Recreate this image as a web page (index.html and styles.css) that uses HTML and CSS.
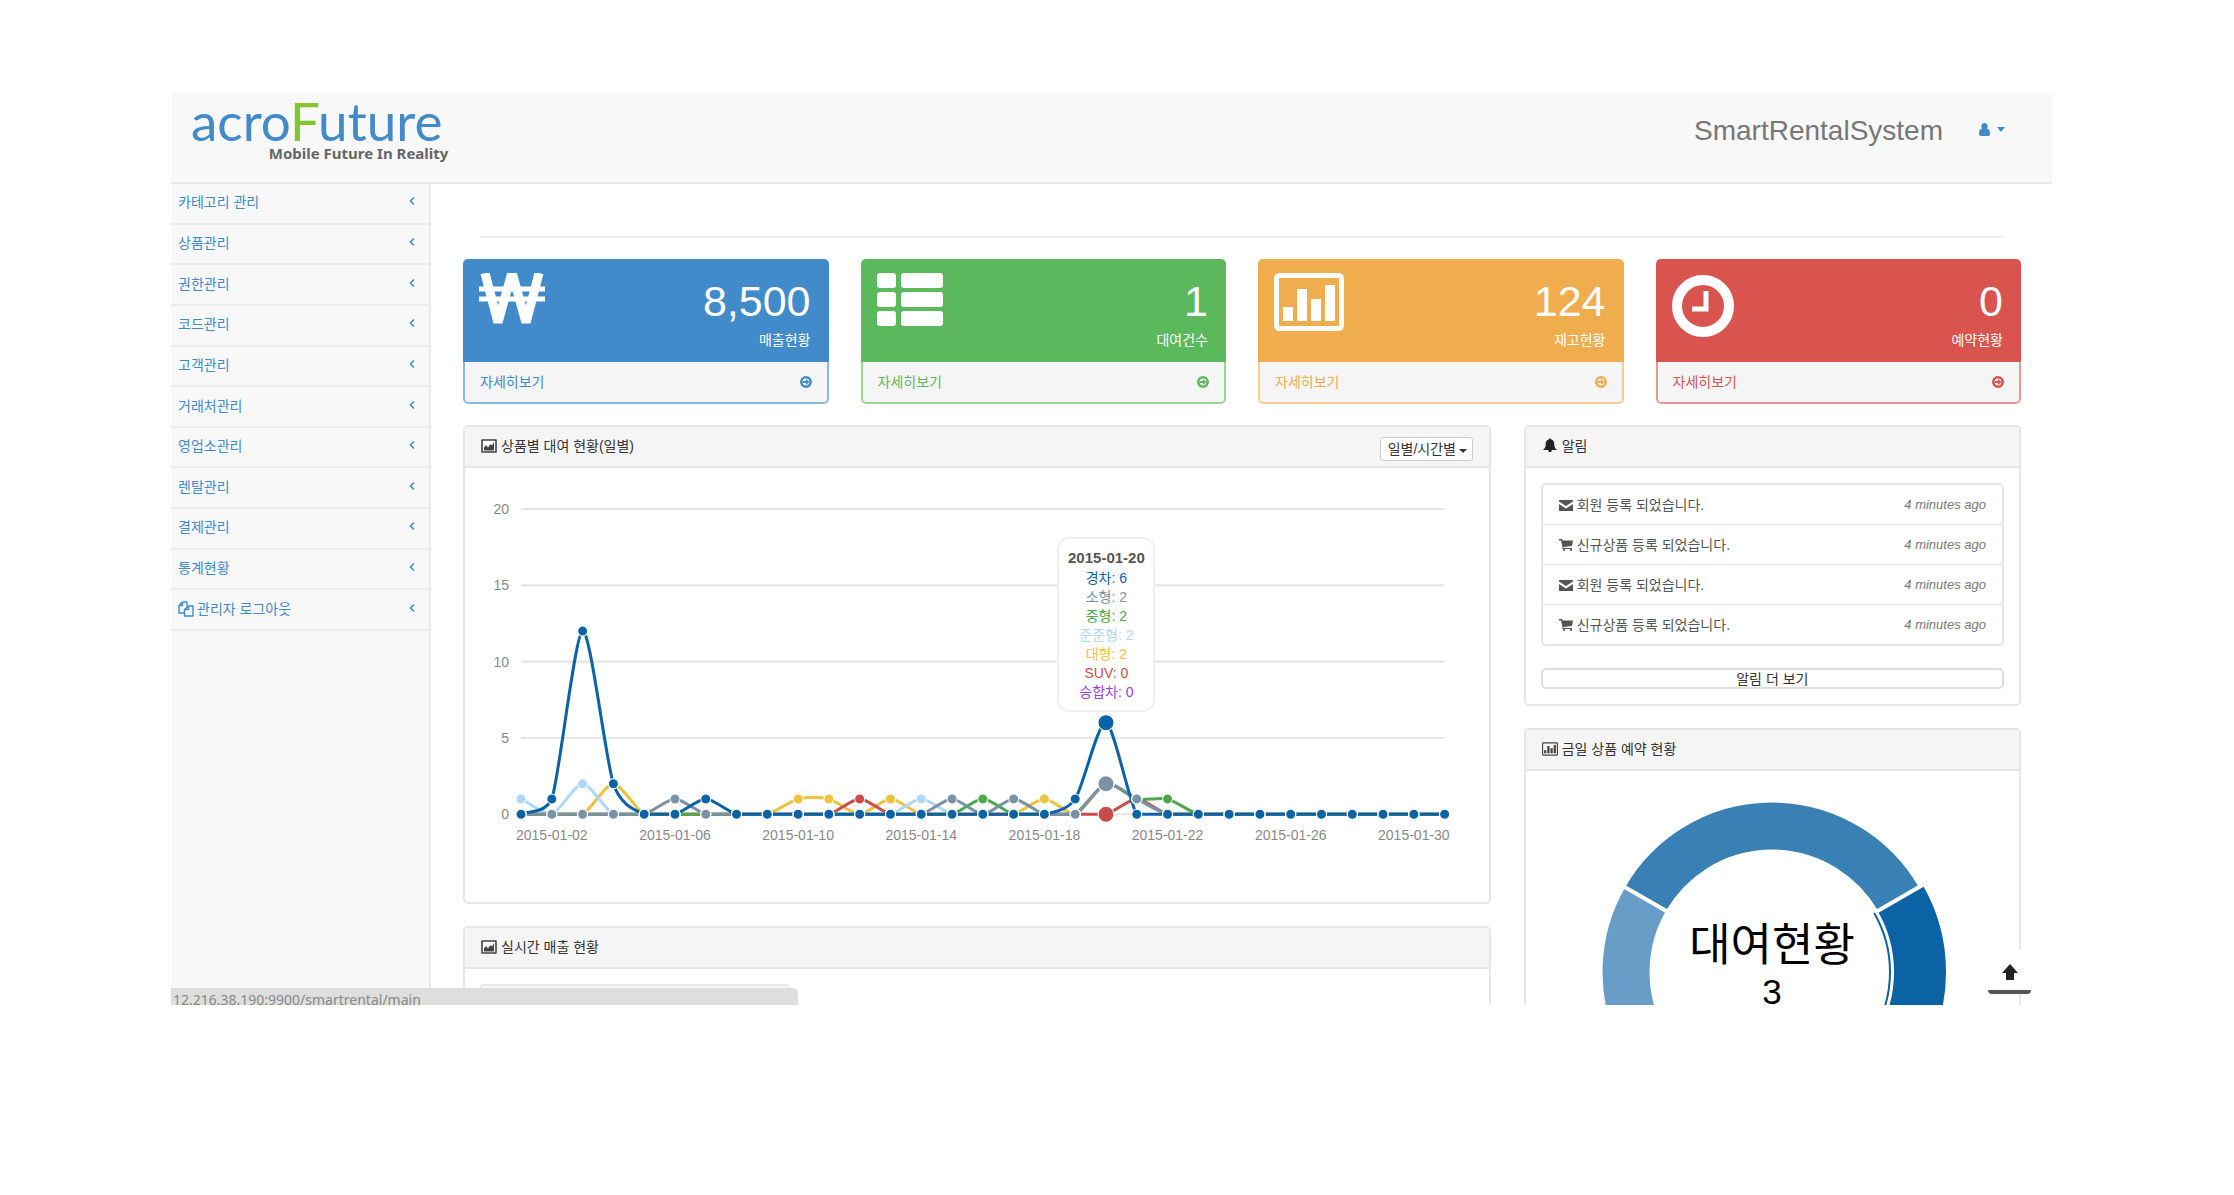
FILE: index.html
```html
<!DOCTYPE html>
<html lang="ko">
<head>
<meta charset="utf-8">
<title>SmartRentalSystem</title>
<link rel="stylesheet" href="styles.css">
</head>
<body>
<svg class="sprite" aria-hidden="true">
  <symbol id="chevron" viewBox="0 0 6 10"><path d="M5 1.500L1.500 5l3.500 3.500" fill="none" stroke="currentColor" stroke-width="1.600"/></symbol>
  <symbol id="files" viewBox="0 0 16 16"><path d="M4.500 1H9v4.500M4.500 1L1 4.500V12h5M1 4.500h3.500V1M10.500 5H15v10H6.500V8.500L10.500 5v3.500h-4" fill="none" stroke="currentColor" stroke-width="1.400" stroke-linejoin="round"/></symbol>
  <symbol id="image" viewBox="0 0 16 14"><path d="M1 1h14v12H1z" fill="#fff" stroke="currentColor" stroke-width="1.600" stroke-linejoin="round"/><path d="M3 11.500V8.500L5 6l2 2.500L9.500 5l1.500 1.500L13 3v8.500z" fill="currentColor"/></symbol>
  <symbol id="chart" viewBox="0 0 70 58"><rect x="2.500" y="2.500" width="65" height="53" rx="3" fill="none" stroke="currentColor" stroke-width="5"/><path d="M9 34h10v14H9zM23 16h10v32H23zM37 26h10v22H37zM51 12h10v36H51z" fill="currentColor"/></symbol>
  <symbol id="arrow" viewBox="0 0 12 12"><circle cx="6" cy="6" r="4.700" fill="none" stroke="currentColor" stroke-width="2.600"/><path d="M3 5h3V3l3.500 3L6 9V7H3z" fill="currentColor"/></symbol>
  <symbol id="bell" viewBox="0 0 14 15"><path d="M7 0l1 1.200c2.300.6 3.300 2.300 3.300 4.800 0 3 .7 4.500 2.700 6H8.800a1.800 2.300 0 0 1-3.600 0H0c2-1.500 2.700-3 2.700-6 0-2.500 1-4.200 3.300-4.800z" fill="currentColor"/></symbol>
  <symbol id="mail" viewBox="0 0 14 12"><path d="M0 1h14v1.500L7 7 0 2.500zM0 5l7 4.500L14 5v7H0z" fill="currentColor"/></symbol>
  <symbol id="cart" viewBox="0 0 14 12"><path d="M0 0h3l.5 1.500H14L13 7 4.500 8v1H13v1H3.500V8L2 1.500H0z" fill="currentColor"/><circle cx="5" cy="11" r="1" fill="currentColor"/><circle cx="12" cy="11" r="1" fill="currentColor"/></symbol>
</svg>

<div class="app">
  <header class="topbar">
    <a class="brand" href="#">
      <span class="brand-name">acro<span class="brand-accent">F</span>uture</span>
      <span class="brand-tag">Mobile Future In Reality</span>
    </a>
    <div class="account">
      <span class="system">SmartRentalSystem</span>
      <button class="user" type="button" aria-label="user">
        <svg width="11" height="13" viewBox="0 0 12 14"><path d="M6 0a3.500 3.500 0 0 1 2.500 6c2.500.2 3.500 2 3.500 5.500 0 1.500-.8 2.500-2 2.500H2c-1.200 0-2-1-2-2.500C0 8 1 6.200 3.500 6A3.500 3.500 0 0 1 6 0z" fill="currentColor"/></svg>
        <svg width="8" height="5" viewBox="0 0 8 5"><path d="M0 0h8L4 5z" fill="currentColor"/></svg>
      </button>
    </div>
  </header>

  <div class="layout">
    <nav class="sidebar">
      <ul class="menu">
        <li><a href="#">카테고리 관리<svg class="chev"><use href="#chevron"/></svg></a></li>
        <li><a href="#">상품관리<svg class="chev"><use href="#chevron"/></svg></a></li>
        <li><a href="#">권한관리<svg class="chev"><use href="#chevron"/></svg></a></li>
        <li><a href="#">코드관리<svg class="chev"><use href="#chevron"/></svg></a></li>
        <li><a href="#">고객관리<svg class="chev"><use href="#chevron"/></svg></a></li>
        <li><a href="#">거래처관리<svg class="chev"><use href="#chevron"/></svg></a></li>
        <li><a href="#">영업소관리<svg class="chev"><use href="#chevron"/></svg></a></li>
        <li><a href="#">렌탈관리<svg class="chev"><use href="#chevron"/></svg></a></li>
        <li><a href="#">결제관리<svg class="chev"><use href="#chevron"/></svg></a></li>
        <li><a href="#">통계현황<svg class="chev"><use href="#chevron"/></svg></a></li>
        <li><a href="#"><svg class="files"><use href="#files"/></svg>관리자 로그아웃<svg class="chev"><use href="#chevron"/></svg></a></li>
      </ul>
    </nav>

    <main class="main">
      <hr class="rule">
      <section class="cards">
        <article class="card blue">
          <div class="card-head">
            <svg width="66" height="52" viewBox="0 0 66 52"><path d="M6 0l12 46h2L32 3h2l12 43h2L60 0" fill="none" stroke="#fff" stroke-width="9"/><path d="M0 16h66M0 26h66" stroke="#fff" stroke-width="5"/></svg>
            <div class="figures"><span class="number">8,500</span><span>매출현황</span></div>
          </div>
          <a class="card-foot" href="#">자세히보기<svg class="go"><use href="#arrow"/></svg></a>
        </article>
        <article class="card green">
          <div class="card-head">
            <svg width="66" height="53" viewBox="0 0 66 53" fill="#fff"><rect width="19" height="15" rx="3"/><rect x="24" width="42" height="15" rx="3"/><rect y="19" width="19" height="15" rx="3"/><rect x="24" y="19" width="42" height="15" rx="3"/><rect y="38" width="19" height="15" rx="3"/><rect x="24" y="38" width="42" height="15" rx="3"/></svg>
            <div class="figures"><span class="number">1</span><span>대여건수</span></div>
          </div>
          <a class="card-foot" href="#">자세히보기<svg class="go"><use href="#arrow"/></svg></a>
        </article>
        <article class="card amber">
          <div class="card-head">
            <svg width="70" height="58"><use href="#chart"/></svg>
            <div class="figures"><span class="number">124</span><span>재고현황</span></div>
          </div>
          <a class="card-foot" href="#">자세히보기<svg class="go"><use href="#arrow"/></svg></a>
        </article>
        <article class="card red">
          <div class="card-head">
            <svg width="62" height="64" viewBox="0 0 62 64" fill="none" stroke="#fff"><circle cx="31" cy="33" r="26" stroke-width="10"/><path d="M34 18v18H20" stroke-width="5"/></svg>
            <div class="figures"><span class="number">0</span><span>예약현황</span></div>
          </div>
          <a class="card-foot" href="#">자세히보기<svg class="go"><use href="#arrow"/></svg></a>
        </article>
      </section>

      <div class="columns">
        <div class="column">
          <section class="panel">
            <h2 class="panel-head"><svg class="img-icon"><use href="#image"/></svg>상품별 대여 현황(일별)
              <span class="picker">
                <select aria-label="일별/시간별"><option>일별/시간별</option></select>
                <svg width="8" height="4" viewBox="0 0 8 4"><path d="M0 0h8L4 4z" fill="#333"/></svg>
              </span>
            </h2>
            <div class="chart">
              <svg id="plot" viewBox="0 0 1023 434"></svg>
              <div class="tip">
                <strong>2015-01-20</strong>
                <span class="c-blue">경차: 6</span>
                <span class="c-gray">소형: 2</span>
                <span class="c-green">중형: 2</span>
                <span class="c-sky">준준형: 2</span>
                <span class="c-gold">대형: 2</span>
                <span class="c-red">SUV: 0</span>
                <span class="c-violet">승합차: 0</span>
              </div>
            </div>
          </section>
          <section class="panel">
            <h2 class="panel-head"><svg class="img-icon"><use href="#image"/></svg>실시간 매출 현황</h2>
            <div class="panel-body"><div class="subbox"></div></div>
          </section>
        </div>

        <div class="column">
          <section class="panel">
            <h2 class="panel-head"><svg class="bell"><use href="#bell"/></svg>알림</h2>
            <div class="panel-body">
              <ul class="alerts">
                <li><a href="#"><svg><use href="#mail"/></svg>회원 등록 되었습니다.<em>4 minutes ago</em></a></li>
                <li><a href="#"><svg><use href="#cart"/></svg>신규상품 등록 되었습니다.<em>4 minutes ago</em></a></li>
                <li><a href="#"><svg><use href="#mail"/></svg>회원 등록 되었습니다.<em>4 minutes ago</em></a></li>
                <li><a href="#"><svg><use href="#cart"/></svg>신규상품 등록 되었습니다.<em>4 minutes ago</em></a></li>
              </ul>
              <button class="more" type="button">알림 더 보기</button>
            </div>
          </section>
          <section class="panel">
            <h2 class="panel-head"><svg class="img-icon"><use href="#chart"/></svg>금일 상품 예약 현황</h2>
            <svg class="donut" width="360" height="400" viewBox="-180 -201 360 400">
              <path d="M-126.400 -73A146 146 0 0 1 126.400 -73" fill="none" stroke="#3980b5" stroke-width="47"/>
              <path d="M0 146A146 146 0 0 1 -126.400 -73" fill="none" stroke="#679dc6" stroke-width="47"/>
              <path d="M128.200 -74A148 148 0 0 1 0 148" fill="none" stroke="#0b62a4" stroke-width="52"/>
              <path d="M102.200 -59A118 118 0 0 1 0 118" fill="none" stroke="#0b62a4" stroke-width="2"/>
              <path d="M-100 -57.700L-150 -86.600M103 -59.500L155 -89.500" stroke="#fff" stroke-width="4"/>
              <text class="donut-label" y="-11">대여현황</text>
              <text class="donut-value" y="32">3</text>
            </svg>
          </section>
        </div>
      </div>
    </main>
  </div>

  <div class="status">12.216.38.190:9900/smartrental/main</div>
  <a class="to-top" href="#" aria-label="top"><svg width="16" height="16" viewBox="0 0 16 16"><path d="M8 0l8 9h-4v7H4V9H0z" fill="#222"/></svg></a>
</div>
<script src="chart.js"></script>
</body>
</html>
```
FILE: chart.js
```js
// Smoothed line chart: daily rentals per vehicle class, January 2015.
const days = 31, left = 56, right = 979, bottom = 346, unit = 15.25;
const px = i => left + (right - left) * i / (days - 1);
const py = v => bottom - v * unit;

// Drawn back to front; days not listed have no rentals.
const series = [
  { color: '#edc240', data: { 3: 2, 9: 1, 10: 1, 12: 1, 17: 1, 19: 2, 20: 1 } },
  { color: '#afd8f8', data: { 0: 1, 2: 2, 13: 1, 19: 2, 20: 1 } },
  { color: '#cb4b4b', data: { 11: 1, 20: 1 } },
  { color: '#4da74d', data: { 15: 1, 19: 2, 20: 1, 21: 1 } },
  { color: '#7a92a3', data: { 5: 1, 14: 1, 16: 1, 19: 2, 20: 1 } },
  { color: '#0b62a4', data: { 1: 1, 2: 12, 3: 2, 6: 1, 18: 1, 19: 6 } }
];
const hovered = 19;

function linePath(ys) {
  const dx = px(1) - px(0), q = dx / 4;
  const slope = i => {
    const a = Math.max(i - 1, 0), b = Math.min(i + 1, ys.length - 1);
    return (ys[b] - ys[a]) / ((b - a) * dx);
  };
  let d = `M${px(0)} ${ys[0]}`;
  for (let i = 1; i < ys.length; i++) {
    const c1 = Math.min(bottom, ys[i - 1] + slope(i - 1) * q);
    const c2 = Math.min(bottom, ys[i] - slope(i) * q);
    d += `C${px(i - 1) + q} ${c1} ${px(i) - q} ${c2} ${px(i)} ${ys[i]}`;
  }
  return d;
}

let out = '';
for (let v = 0; v <= 20; v += 5) {
  out += `<path class="grid" d="M${left} ${py(v)}H${right}"/>`;
  out += `<text class="tick end" x="44" y="${py(v) + 5}">${v}</text>`;
}
for (let i = 1; i < days; i += 4) {
  out += `<text class="tick" x="${px(i)}" y="372">2015-01-${String(i + 1).padStart(2, '0')}</text>`;
}
const values = series.map(s => Array.from({ length: days }, (_, i) => py(s.data[i] || 0)));
series.forEach((s, n) => { out += `<path class="line" stroke="${s.color}" d="${linePath(values[n])}"/>`; });
series.forEach((s, n) => values[n].forEach((y, i) => {
  out += `<circle class="dot" cx="${px(i)}" cy="${y}" r="${i === hovered ? 8 : 5}" fill="${s.color}"/>`;
}));
document.getElementById('plot').innerHTML = out;
```
FILE: styles.css
```css
* { box-sizing: border-box; }
body {
  margin: 0;
  height: 100vh;
  padding: 93px 182px 190px 171px;
  background: #fff;
  color: #333;
  font: 14px/20px "Liberation Sans", "Noto Sans CJK KR", sans-serif;
}
a { color: #428bca; text-decoration: none; }
ul { list-style: none; margin: 0; padding: 0; }
button, select { font: inherit; color: inherit; }
.sprite { position: absolute; width: 0; height: 0; }

.app { position: relative; height: 100%; display: flex; flex-direction: column; }
.topbar {
  flex: none;
  display: flex;
  justify-content: space-between;
  align-items: flex-start;
  height: 91px;
  padding: 0 47px 0 20px;
  background: #f8f8f8;
  border-bottom: 2px solid #e9e9e9;
}
.brand { display: flex; flex-direction: column; padding-top: 4px; }
.brand-name { font: 53px/48px Lato, sans-serif; color: #428bca; }
.brand-accent { color: #84c62f; }
.brand-tag { align-self: flex-end; margin-right: -6px; font: bold 15px/16px "Noto Sans", sans-serif; color: #666; }
.account { display: flex; align-items: center; gap: 36px; padding-top: 20px; }
.system { font-size: 28px; line-height: 36px; color: #777; }
.user { display: flex; align-items: center; gap: 7px; padding: 0 0 4px; border: 0; background: none; color: #428bca; }

.layout { flex: 1; min-height: 0; display: flex; align-items: stretch; overflow: hidden; }
.sidebar { flex: none; width: 260px; background: #f8f8f8; border-right: 2px solid #e9e9e9; }
.menu { display: flex; flex-direction: column; height: 447px; }
.menu li { flex: 1; display: flex; border-bottom: 2px solid #ececec; }
.menu a { flex: 1; display: flex; align-items: center; padding: 0 14px 2px 7px; }
.chev { width: 6px; height: 10px; margin: 0 0 2px auto; }
.files { width: 16px; height: 16px; margin-right: 3px; }

.main { flex: 1; min-width: 0; padding: 52px 31px 0 32px; }
.rule { height: 2px; margin: 0 17px 21px; border: 0; background: #f0f0f0; }
.cards { display: grid; grid-template-columns: repeat(4, 1fr); gap: 32px; }
.card { border-radius: 5px; overflow: hidden; }
.card-head {
  display: flex;
  justify-content: space-between;
  align-items: flex-start;
  height: 103px;
  padding: 14px 18px 0 16px;
  background: var(--c);
  color: #fff;
}
.figures { display: flex; flex-direction: column; align-items: flex-end; padding-top: 6px; }
.number { font-size: 43px; line-height: 45px; }
.figures span + span { margin-top: 6px; }
.card-foot {
  display: flex;
  justify-content: space-between;
  align-items: center;
  height: 42px;
  padding: 0 15px;
  border: 2px solid var(--edge);
  border-top: 0;
  border-radius: 0 0 5px 5px;
  background: #f5f5f5;
  color: var(--c);
}
.go { width: 12px; height: 12px; }
.blue { --c: #428bca; --edge: #8ab8df; }
.green { --c: #5cb85c; --edge: #9ad49a; }
.amber { --c: #f0ad4e; --edge: #f6cd94; }
.red { --c: #d9534f; --edge: #e99694; }

.columns { display: grid; grid-template-columns: 1027fr 497fr; gap: 33px; margin-top: 21px; align-items: start; }
.column { display: flex; flex-direction: column; gap: 22px; min-width: 0; }
.panel { border: 2px solid #e6e6e6; border-radius: 5px; background: #fff; }
.panel-head {
  display: flex;
  align-items: center;
  height: 41px;
  margin: 0;
  padding: 0 16px 2px;
  background: #f5f5f5;
  border-bottom: 2px solid #e6e6e6;
  font-size: 14px;
  font-weight: normal;
}
.img-icon { width: 16px; height: 14px; margin-right: 4px; color: #444; }
.bell { width: 14px; height: 15px; margin: 0 5px 0 1px; color: #222; }
.panel-body { padding: 15px; }
.picker { position: relative; display: flex; margin-left: auto; margin-top: 6px; }
.picker select {
  appearance: none;
  width: 93px;
  height: 24px;
  padding: 0 0 0 7px;
  border: 1px solid #ccc;
  border-radius: 3px;
  background: #fff;
}
.picker svg { position: absolute; right: 6px; top: 12px; }

.chart { position: relative; }
.chart > svg { display: block; width: 100%; }
.grid { stroke: #e6e6e6; stroke-width: 2; }
.tick { fill: #888; font-size: 14px; text-anchor: middle; }
.end { text-anchor: end; }
.line { fill: none; stroke-width: 3; }
.dot { stroke: #fff; stroke-width: 1; }
.tip {
  position: absolute;
  left: calc(100% * 641 / 1023);
  top: 69px;
  transform: translateX(-50%);
  display: flex;
  flex-direction: column;
  align-items: center;
  width: 98px;
  padding: 8px 0;
  border: 2px solid #f0f0f0;
  border-radius: 12px;
  background: rgba(255, 255, 255, .9);
  line-height: 19px;
}
.tip strong { font-size: 15px; line-height: 22px; color: #555; }
.c-blue { color: #0b62a4; }
.c-gray { color: #7a92a3; }
.c-green { color: #4da74d; }
.c-sky { color: #afd8f8; }
.c-gold { color: #edc240; }
.c-red { color: #cb4b4b; }
.c-violet { color: #9440ed; }
.subbox { width: 310px; height: 60px; border: 2px solid #e9e9e9; border-radius: 4px; background: #f8f8f8; }

.alerts { border: 2px solid #e6e6e6; border-radius: 5px; }
.alerts li + li { border-top: 1px solid #ddd; }
.alerts a { display: flex; align-items: center; height: 39px; padding: 0 16px; color: #555; }
.alerts svg { width: 14px; height: 12px; margin-right: 4px; }
.alerts em { margin-left: auto; font-size: 13px; color: #777; }
.more {
  display: block;
  width: 100%;
  height: 21px;
  margin-top: 22px;
  padding: 0;
  border: 2px solid #ddd;
  border-radius: 5px;
  background: #fff;
  line-height: 16px;
}
.donut { display: block; margin: 0 auto; }
.donut text { text-anchor: middle; fill: #000; }
.donut-label { font-size: 45px; }
.donut-value { font-size: 35px; }

.status {
  position: absolute;
  left: 0;
  bottom: 0;
  width: calc(100% / 3);
  height: 17px;
  padding: 2px;
  overflow: hidden;
  border-top-right-radius: 5px;
  background: #dedede;
  color: #888;
  font: 14px/20px "Noto Sans", sans-serif;
}
.to-top {
  position: absolute;
  right: 21px;
  bottom: 11px;
  display: flex;
  justify-content: center;
  width: 43px;
  height: 44px;
  padding-top: 14px;
  border-bottom: 4px solid #555;
  border-radius: 4px;
  background: #fff;
}
```
